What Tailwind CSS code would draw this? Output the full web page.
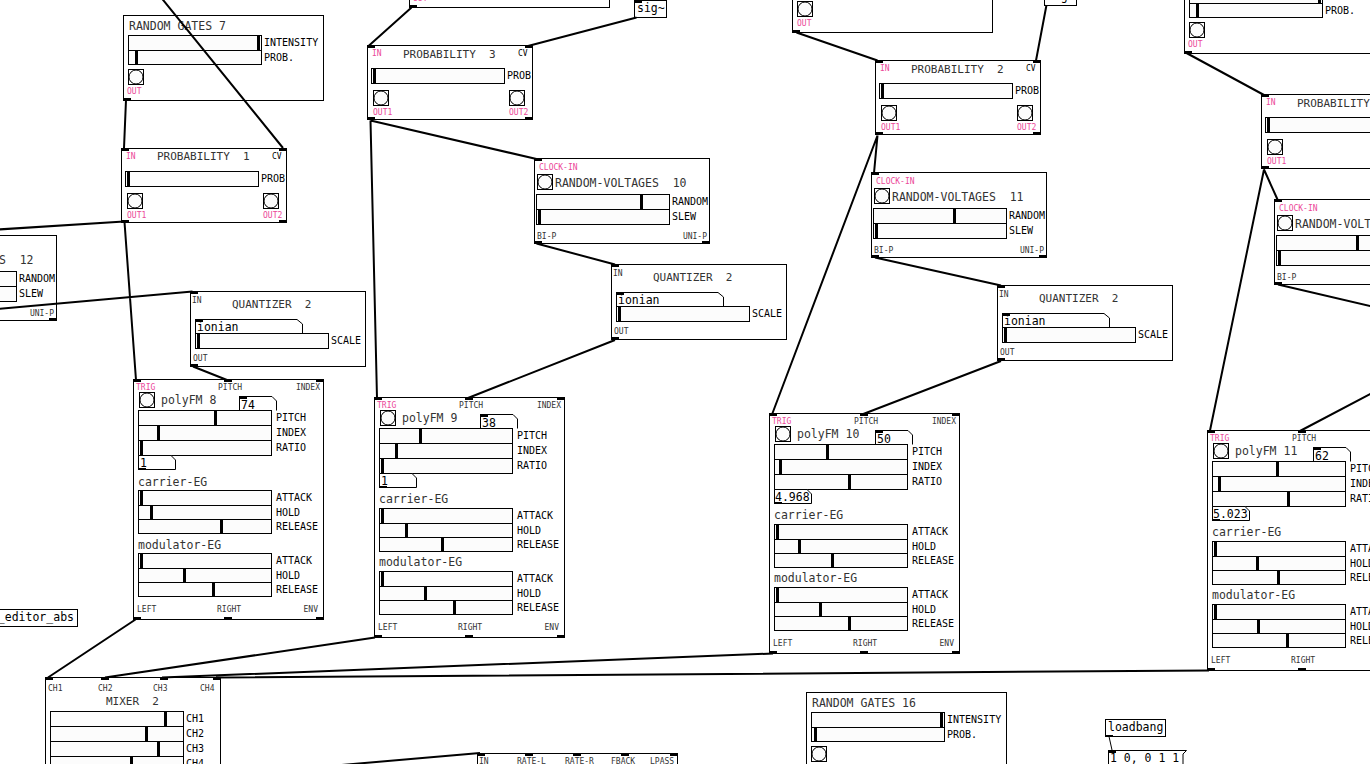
<!DOCTYPE html>
<html>
<head>
<meta charset="utf-8">
<script src="https://cdn.jsdelivr.net/npm/@tailwindcss/browser@4"></script>
</head>
<body class="bg-white">
<div class="relative w-[1370px] h-[764px] overflow-hidden bg-white text-black font-['DejaVu_Sans_Mono',monospace] text-[10px] whitespace-nowrap">

<!-- RANDOM GATES 7 -->
<div class="absolute left-[123px] top-[15px] w-[201px] h-[86px] border border-black bg-white">
  <span class="absolute left-[5px] top-[3px] text-[11.5px] leading-[14px] text-[#333]">RANDOM GATES 7</span>
  <div class="absolute left-[4px] top-[19px]">
    <div class="flex h-[15px]"><div class="relative w-[134px] h-[16px] shrink-0 border border-black bg-[#fcfcfc]"><i class="absolute inset-y-0 left-[128px] w-[3px] bg-black"></i></div><span class="ml-[2px] leading-[15px]">INTENSITY</span></div>
    <div class="flex h-[15px]"><div class="relative w-[134px] h-[15px] shrink-0 border border-black bg-[#fcfcfc]"><i class="absolute inset-y-0 left-[6px] w-[3px] bg-black"></i></div><span class="ml-[2px] leading-[15px]">PROB.</span></div>
  </div>
  <svg class="absolute left-[4px] top-[53px]" width="16" height="16"><rect x=".5" y=".5" width="15" height="15" fill="#fcfcfc" stroke="#000"/><circle cx="8" cy="8" r="7" fill="#fcfcfc" stroke="#000"/></svg>
  <span class="absolute left-[3px] top-[72px] text-[8px] leading-[8px] text-[#ec4899]">OUT</span>
  <i class="absolute -left-px -bottom-px w-[8px] h-[3px] bg-black"></i>
</div>

<!-- RANDOM GATES top -->
<div class="absolute left-[409px] top-[-78px] w-[201px] h-[86px] border border-black bg-white">
  <span class="absolute left-[3px] top-[72px] text-[8px] leading-[8px] text-[#ec4899]">OUT</span>
  <i class="absolute -left-px -bottom-px w-[8px] h-[3px] bg-black"></i>
</div>

<!-- RANDOM GATES top middle -->
<div class="absolute left-[792px] top-[-53px] w-[201px] h-[86px] border border-black bg-white">
  <svg class="absolute left-[4px] top-[53px]" width="16" height="16"><rect x=".5" y=".5" width="15" height="15" fill="#fcfcfc" stroke="#000"/><circle cx="8" cy="8" r="7" fill="#fcfcfc" stroke="#000"/></svg>
  <span class="absolute left-[4px] top-[72px] text-[8px] leading-[8px] text-[#ec4899]">OUT</span>
  <i class="absolute -left-px -bottom-px w-[8px] h-[3px] bg-black"></i>
</div>

<!-- RANDOM GATES top right -->
<div class="absolute left-[1184px] top-[-32px] w-[201px] h-[86px] border border-black bg-white">
  <div class="absolute left-[4px] top-[19px]">
    <div class="flex h-[15px]"><div class="relative w-[134px] h-[16px] shrink-0 border border-black bg-[#fcfcfc]"><i class="absolute inset-y-0 left-[128px] w-[3px] bg-black"></i></div><span class="ml-[2px] leading-[15px]">INTENSITY</span></div>
    <div class="flex h-[15px]"><div class="relative w-[134px] h-[15px] shrink-0 border border-black bg-[#fcfcfc]"><i class="absolute inset-y-0 left-[6px] w-[3px] bg-black"></i></div><span class="ml-[2px] leading-[15px]">PROB.</span></div>
  </div>
  <svg class="absolute left-[4px] top-[53px]" width="16" height="16"><rect x=".5" y=".5" width="15" height="15" fill="#fcfcfc" stroke="#000"/><circle cx="8" cy="8" r="7" fill="#fcfcfc" stroke="#000"/></svg>
  <span class="absolute left-[3px] top-[72px] text-[8px] leading-[8px] text-[#ec4899]">OUT</span>
  <i class="absolute -left-px -bottom-px w-[8px] h-[3px] bg-black"></i>
</div>

<!-- RANDOM GATES 16 -->
<div class="absolute left-[806px] top-[692px] w-[201px] h-[86px] border border-black bg-white">
  <span class="absolute left-[5px] top-[3px] text-[11.5px] leading-[14px] text-[#333]">RANDOM GATES 16</span>
  <div class="absolute left-[4px] top-[19px]">
    <div class="flex h-[15px]"><div class="relative w-[134px] h-[16px] shrink-0 border border-black bg-[#fcfcfc]"><i class="absolute inset-y-0 left-[128px] w-[3px] bg-black"></i></div><span class="ml-[2px] leading-[15px]">INTENSITY</span></div>
    <div class="flex h-[15px]"><div class="relative w-[134px] h-[15px] shrink-0 border border-black bg-[#fcfcfc]"><i class="absolute inset-y-0 left-[2px] w-[3px] bg-black"></i></div><span class="ml-[2px] leading-[15px]">PROB.</span></div>
  </div>
  <svg class="absolute left-[4px] top-[53px]" width="16" height="16"><rect x=".5" y=".5" width="15" height="15" fill="#fcfcfc" stroke="#000"/><circle cx="8" cy="8" r="7" fill="#fcfcfc" stroke="#000"/></svg>
</div>

<!-- sig~ boxes -->
<div class="absolute left-[634px] top-0 w-[33px] h-[18px] border border-black bg-white pl-[2px] text-[11.5px] leading-[15px]">sig~<i class="absolute -left-px -top-px w-[8px] h-[3px] bg-black"></i></div>
<div class="absolute left-[1044px] top-[-12px] w-[33px] h-[18px] border border-black bg-white pl-[2px] text-[11.5px] leading-[15px]">sig~</div>

<!-- PROBABILITY 1 -->
<div class="absolute left-[121px] top-[148px] w-[166px] h-[75px] border border-black bg-white">
  <i class="absolute -left-px -top-px w-[8px] h-[3px] bg-black"></i><i class="absolute -right-px -top-px w-[8px] h-[3px] bg-black"></i><i class="absolute -left-px -bottom-px w-[8px] h-[3px] bg-black"></i><i class="absolute -right-px -bottom-px w-[8px] h-[3px] bg-black"></i>
  <span class="absolute left-[4px] top-[4px] text-[8px] leading-[8px] text-[#ec4899]">IN</span>
  <span class="absolute left-[150px] top-[4px] text-[8px] leading-[8px]">CV</span>
  <span class="absolute left-[35px] top-[1px] whitespace-pre text-[11px] leading-[14px] text-[#333]">PROBABILITY  1</span>
  <div class="absolute left-[3px] top-[22px] flex h-[16px]"><div class="relative w-[134px] h-[16px] shrink-0 border border-black bg-[#fcfcfc]"><i class="absolute inset-y-0 left-[1px] w-[3px] bg-black"></i></div><span class="ml-[2px] leading-[15px]">PROB</span></div>
  <svg class="absolute left-[5px] top-[44px]" width="16" height="16"><rect x=".5" y=".5" width="15" height="15" fill="#fcfcfc" stroke="#000"/><circle cx="8" cy="8" r="7" fill="#fcfcfc" stroke="#000"/></svg>
  <svg class="absolute left-[141px] top-[44px]" width="16" height="16"><rect x=".5" y=".5" width="15" height="15" fill="#fcfcfc" stroke="#000"/><circle cx="8" cy="8" r="7" fill="#fcfcfc" stroke="#000"/></svg>
  <span class="absolute left-[5px] top-[63px] text-[8px] leading-[8px] text-[#ec4899]">OUT1</span>
  <span class="absolute left-[141px] top-[63px] text-[8px] leading-[8px] text-[#ec4899]">OUT2</span>
</div>

<!-- PROBABILITY 3 -->
<div class="absolute left-[367px] top-[45px] w-[166px] h-[75px] border border-black bg-white">
  <i class="absolute -left-px -top-px w-[8px] h-[3px] bg-black"></i><i class="absolute -right-px -top-px w-[8px] h-[3px] bg-black"></i><i class="absolute -left-px -bottom-px w-[8px] h-[3px] bg-black"></i><i class="absolute -right-px -bottom-px w-[8px] h-[3px] bg-black"></i>
  <span class="absolute left-[4px] top-[4px] text-[8px] leading-[8px] text-[#ec4899]">IN</span>
  <span class="absolute left-[150px] top-[4px] text-[8px] leading-[8px]">CV</span>
  <span class="absolute left-[35px] top-[2px] whitespace-pre text-[11px] leading-[14px] text-[#333]">PROBABILITY  3</span>
  <div class="absolute left-[3px] top-[22px] flex h-[16px]"><div class="relative w-[134px] h-[16px] shrink-0 border border-black bg-[#fcfcfc]"><i class="absolute inset-y-0 left-[1px] w-[3px] bg-black"></i></div><span class="ml-[2px] leading-[15px]">PROB</span></div>
  <svg class="absolute left-[5px] top-[44px]" width="16" height="16"><rect x=".5" y=".5" width="15" height="15" fill="#fcfcfc" stroke="#000"/><circle cx="8" cy="8" r="7" fill="#fcfcfc" stroke="#000"/></svg>
  <svg class="absolute left-[141px] top-[44px]" width="16" height="16"><rect x=".5" y=".5" width="15" height="15" fill="#fcfcfc" stroke="#000"/><circle cx="8" cy="8" r="7" fill="#fcfcfc" stroke="#000"/></svg>
  <span class="absolute left-[5px] top-[63px] text-[8px] leading-[8px] text-[#ec4899]">OUT1</span>
  <span class="absolute left-[141px] top-[63px] text-[8px] leading-[8px] text-[#ec4899]">OUT2</span>
</div>

<!-- PROBABILITY 2 -->
<div class="absolute left-[875px] top-[60px] w-[166px] h-[75px] border border-black bg-white">
  <i class="absolute -left-px -top-px w-[8px] h-[3px] bg-black"></i><i class="absolute -right-px -top-px w-[8px] h-[3px] bg-black"></i><i class="absolute -left-px -bottom-px w-[8px] h-[3px] bg-black"></i><i class="absolute -right-px -bottom-px w-[8px] h-[3px] bg-black"></i>
  <span class="absolute left-[4px] top-[4px] text-[8px] leading-[8px] text-[#ec4899]">IN</span>
  <span class="absolute left-[150px] top-[4px] text-[8px] leading-[8px]">CV</span>
  <span class="absolute left-[35px] top-[2px] whitespace-pre text-[11px] leading-[14px] text-[#333]">PROBABILITY  2</span>
  <div class="absolute left-[3px] top-[22px] flex h-[16px]"><div class="relative w-[134px] h-[16px] shrink-0 border border-black bg-[#fcfcfc]"><i class="absolute inset-y-0 left-[1px] w-[3px] bg-black"></i></div><span class="ml-[2px] leading-[15px]">PROB</span></div>
  <svg class="absolute left-[5px] top-[44px]" width="16" height="16"><rect x=".5" y=".5" width="15" height="15" fill="#fcfcfc" stroke="#000"/><circle cx="8" cy="8" r="7" fill="#fcfcfc" stroke="#000"/></svg>
  <svg class="absolute left-[141px] top-[44px]" width="16" height="16"><rect x=".5" y=".5" width="15" height="15" fill="#fcfcfc" stroke="#000"/><circle cx="8" cy="8" r="7" fill="#fcfcfc" stroke="#000"/></svg>
  <span class="absolute left-[5px] top-[63px] text-[8px] leading-[8px] text-[#ec4899]">OUT1</span>
  <span class="absolute left-[141px] top-[63px] text-[8px] leading-[8px] text-[#ec4899]">OUT2</span>
</div>

<!-- PROBABILITY 4 -->
<div class="absolute left-[1261px] top-[94px] w-[166px] h-[75px] border border-black bg-white">
  <i class="absolute -left-px -top-px w-[8px] h-[3px] bg-black"></i><i class="absolute -left-px -bottom-px w-[8px] h-[3px] bg-black"></i>
  <span class="absolute left-[4px] top-[4px] text-[8px] leading-[8px] text-[#ec4899]">IN</span>
  <span class="absolute left-[35px] top-[2px] whitespace-pre text-[11px] leading-[14px] text-[#333]">PROBABILITY  4</span>
  <div class="absolute left-[3px] top-[22px] flex h-[16px]"><div class="relative w-[134px] h-[16px] shrink-0 border border-black bg-[#fcfcfc]"><i class="absolute inset-y-0 left-[1px] w-[3px] bg-black"></i></div></div>
  <svg class="absolute left-[5px] top-[44px]" width="16" height="16"><rect x=".5" y=".5" width="15" height="15" fill="#fcfcfc" stroke="#000"/><circle cx="8" cy="8" r="7" fill="#fcfcfc" stroke="#000"/></svg>
  <span class="absolute left-[5px] top-[63px] text-[8px] leading-[8px] text-[#ec4899]">OUT1</span>
</div>

<!-- RANDOM-VOLTAGES 12 -->
<div class="absolute left-[-119px] top-[235px] w-[176px] h-[86px] border border-black bg-white">
  <span class="absolute left-[20px] top-[17px] whitespace-pre text-[11.5px] leading-[14px] text-[#333]">RANDOM-VOLTAGES  12</span>
  <div class="absolute left-[1px] top-[35px]">
    <div class="flex h-[15px]"><div class="relative w-[134px] h-[16px] shrink-0 border border-black bg-[#fcfcfc]"></div><span class="ml-[2px] leading-[15px]">RANDOM</span></div>
    <div class="flex h-[15px]"><div class="relative w-[134px] h-[16px] shrink-0 border border-black bg-[#fcfcfc]"></div><span class="ml-[2px] leading-[15px]">SLEW</span></div>
  </div>
  <span class="absolute right-[2px] top-[74px] text-[8px] leading-[8px] text-[#333]">UNI-P</span>
  <i class="absolute -right-px -bottom-px w-[8px] h-[3px] bg-black"></i>
</div>

<!-- RANDOM-VOLTAGES 10 -->
<div class="absolute left-[534px] top-[158px] w-[176px] h-[86px] border border-black bg-white">
  <i class="absolute -left-px -top-px w-[8px] h-[3px] bg-black"></i><i class="absolute -left-px -bottom-px w-[8px] h-[3px] bg-black"></i><i class="absolute -right-px -bottom-px w-[8px] h-[3px] bg-black"></i>
  <span class="absolute left-[4px] top-[5px] text-[8px] leading-[8px] text-[#ec4899]">CLOCK-IN</span>
  <svg class="absolute left-[2px] top-[15px]" width="16" height="16"><rect x=".5" y=".5" width="15" height="15" fill="#fcfcfc" stroke="#000"/><circle cx="8" cy="8" r="7" fill="#fcfcfc" stroke="#000"/></svg>
  <span class="absolute left-[20px] top-[17px] whitespace-pre text-[11.5px] leading-[14px] text-[#333]">RANDOM-VOLTAGES  10</span>
  <div class="absolute left-[1px] top-[35px]">
    <div class="flex h-[15px]"><div class="relative w-[134px] h-[16px] shrink-0 border border-black bg-[#fcfcfc]"><i class="absolute inset-y-0 left-[103px] w-[3px] bg-black"></i></div><span class="ml-[2px] leading-[15px]">RANDOM</span></div>
    <div class="flex h-[15px]"><div class="relative w-[134px] h-[16px] shrink-0 border border-black bg-[#fcfcfc]"><i class="absolute inset-y-0 left-[1px] w-[3px] bg-black"></i></div><span class="ml-[2px] leading-[15px]">SLEW</span></div>
  </div>
  <span class="absolute left-[2px] top-[74px] text-[8px] leading-[8px] text-[#333]">BI-P</span>
  <span class="absolute right-[2px] top-[74px] text-[8px] leading-[8px] text-[#333]">UNI-P</span>
</div>

<!-- RANDOM-VOLTAGES 11 -->
<div class="absolute left-[871px] top-[172px] w-[176px] h-[86px] border border-black bg-white">
  <i class="absolute -left-px -top-px w-[8px] h-[3px] bg-black"></i><i class="absolute -left-px -bottom-px w-[8px] h-[3px] bg-black"></i><i class="absolute -right-px -bottom-px w-[8px] h-[3px] bg-black"></i>
  <span class="absolute left-[4px] top-[5px] text-[8px] leading-[8px] text-[#ec4899]">CLOCK-IN</span>
  <svg class="absolute left-[2px] top-[15px]" width="16" height="16"><rect x=".5" y=".5" width="15" height="15" fill="#fcfcfc" stroke="#000"/><circle cx="8" cy="8" r="7" fill="#fcfcfc" stroke="#000"/></svg>
  <span class="absolute left-[20px] top-[17px] whitespace-pre text-[11.5px] leading-[14px] text-[#333]">RANDOM-VOLTAGES  11</span>
  <div class="absolute left-[1px] top-[35px]">
    <div class="flex h-[15px]"><div class="relative w-[134px] h-[16px] shrink-0 border border-black bg-[#fcfcfc]"><i class="absolute inset-y-0 left-[79px] w-[3px] bg-black"></i></div><span class="ml-[2px] leading-[15px]">RANDOM</span></div>
    <div class="flex h-[15px]"><div class="relative w-[134px] h-[16px] shrink-0 border border-black bg-[#fcfcfc]"><i class="absolute inset-y-0 left-[1px] w-[3px] bg-black"></i></div><span class="ml-[2px] leading-[15px]">SLEW</span></div>
  </div>
  <span class="absolute left-[2px] top-[74px] text-[8px] leading-[8px] text-[#333]">BI-P</span>
  <span class="absolute right-[2px] top-[74px] text-[8px] leading-[8px] text-[#333]">UNI-P</span>
</div>

<!-- RANDOM-VOLTAGES right -->
<div class="absolute left-[1274px] top-[199px] w-[176px] h-[86px] border border-black bg-white">
  <i class="absolute -left-px -top-px w-[8px] h-[3px] bg-black"></i><i class="absolute -left-px -bottom-px w-[8px] h-[3px] bg-black"></i>
  <span class="absolute left-[4px] top-[5px] text-[8px] leading-[8px] text-[#ec4899]">CLOCK-IN</span>
  <svg class="absolute left-[2px] top-[15px]" width="16" height="16"><rect x=".5" y=".5" width="15" height="15" fill="#fcfcfc" stroke="#000"/><circle cx="8" cy="8" r="7" fill="#fcfcfc" stroke="#000"/></svg>
  <span class="absolute left-[20px] top-[17px] whitespace-pre text-[11.5px] leading-[14px] text-[#333]">RANDOM-VOLTAGES</span>
  <div class="absolute left-[1px] top-[35px]">
    <div class="flex h-[15px]"><div class="relative w-[134px] h-[16px] shrink-0 border border-black bg-[#fcfcfc]"><i class="absolute inset-y-0 left-[79px] w-[3px] bg-black"></i></div></div>
    <div class="flex h-[15px]"><div class="relative w-[134px] h-[16px] shrink-0 border border-black bg-[#fcfcfc]"><i class="absolute inset-y-0 left-[1px] w-[3px] bg-black"></i></div></div>
  </div>
  <span class="absolute left-[2px] top-[74px] text-[8px] leading-[8px] text-[#333]">BI-P</span>
</div>

<!-- QUANTIZER 1 -->
<div class="absolute left-[190px] top-[291px] w-[176px] h-[76px] border border-black bg-white">
  <i class="absolute -left-px -top-px w-[8px] h-[3px] bg-black"></i><i class="absolute -left-px -bottom-px w-[8px] h-[3px] bg-black"></i>
  <span class="absolute left-[1px] top-[5px] text-[8px] leading-[8px] text-[#333]">IN</span>
  <span class="absolute left-[41px] top-[6px] whitespace-pre text-[11px] leading-[14px] text-[#333]">QUANTIZER  2</span>
  <div class="absolute left-[4px] top-[27px] w-[108px] h-[15px]"><svg class="absolute inset-0" width="108" height="15"><path d="M.5 14.5V.5H102L107.5 5V14.5" fill="#fff" stroke="#000"/></svg><i class="absolute left-0 top-0 w-[8px] h-[3px] bg-black"></i><span class="absolute left-[2px] top-[1px] text-[11.5px] leading-[14px]">ionian</span></div>
  <div class="absolute left-[4px] top-[41px] flex h-[16px]"><div class="relative w-[134px] h-[16px] shrink-0 border border-black bg-[#fcfcfc]"><i class="absolute inset-y-0 left-[1px] w-[3px] bg-black"></i></div><span class="ml-[2px] leading-[15px]">SCALE</span></div>
  <span class="absolute left-[2px] top-[63px] text-[8px] leading-[8px] text-[#333]">OUT</span>
</div>

<!-- QUANTIZER 2 -->
<div class="absolute left-[611px] top-[264px] w-[176px] h-[76px] border border-black bg-white">
  <i class="absolute -left-px -top-px w-[8px] h-[3px] bg-black"></i><i class="absolute -left-px -bottom-px w-[8px] h-[3px] bg-black"></i>
  <span class="absolute left-[1px] top-[5px] text-[8px] leading-[8px] text-[#333]">IN</span>
  <span class="absolute left-[41px] top-[6px] whitespace-pre text-[11px] leading-[14px] text-[#333]">QUANTIZER  2</span>
  <div class="absolute left-[4px] top-[27px] w-[108px] h-[15px]"><svg class="absolute inset-0" width="108" height="15"><path d="M.5 14.5V.5H102L107.5 5V14.5" fill="#fff" stroke="#000"/></svg><i class="absolute left-0 top-0 w-[8px] h-[3px] bg-black"></i><span class="absolute left-[2px] top-[1px] text-[11.5px] leading-[14px]">ionian</span></div>
  <div class="absolute left-[4px] top-[41px] flex h-[16px]"><div class="relative w-[134px] h-[16px] shrink-0 border border-black bg-[#fcfcfc]"><i class="absolute inset-y-0 left-[1px] w-[3px] bg-black"></i></div><span class="ml-[2px] leading-[15px]">SCALE</span></div>
  <span class="absolute left-[2px] top-[63px] text-[8px] leading-[8px] text-[#333]">OUT</span>
</div>

<!-- QUANTIZER 3 -->
<div class="absolute left-[997px] top-[285px] w-[176px] h-[76px] border border-black bg-white">
  <i class="absolute -left-px -top-px w-[8px] h-[3px] bg-black"></i><i class="absolute -left-px -bottom-px w-[8px] h-[3px] bg-black"></i>
  <span class="absolute left-[1px] top-[5px] text-[8px] leading-[8px] text-[#333]">IN</span>
  <span class="absolute left-[41px] top-[6px] whitespace-pre text-[11px] leading-[14px] text-[#333]">QUANTIZER  2</span>
  <div class="absolute left-[4px] top-[27px] w-[108px] h-[15px]"><svg class="absolute inset-0" width="108" height="15"><path d="M.5 14.5V.5H102L107.5 5V14.5" fill="#fff" stroke="#000"/></svg><i class="absolute left-0 top-0 w-[8px] h-[3px] bg-black"></i><span class="absolute left-[2px] top-[1px] text-[11.5px] leading-[14px]">ionian</span></div>
  <div class="absolute left-[4px] top-[41px] flex h-[16px]"><div class="relative w-[134px] h-[16px] shrink-0 border border-black bg-[#fcfcfc]"><i class="absolute inset-y-0 left-[1px] w-[3px] bg-black"></i></div><span class="ml-[2px] leading-[15px]">SCALE</span></div>
  <span class="absolute left-[2px] top-[63px] text-[8px] leading-[8px] text-[#333]">OUT</span>
</div>

<!-- polyFM 8 -->
<div class="absolute left-[133px] top-[379px] w-[191px] h-[241px] border border-black bg-white">
  <i class="absolute -left-px -top-px w-[8px] h-[3px] bg-black"></i><i class="absolute left-[90px] -top-px w-[8px] h-[3px] bg-black"></i><i class="absolute -right-px -top-px w-[8px] h-[3px] bg-black"></i><i class="absolute -left-px -bottom-px w-[8px] h-[3px] bg-black"></i><i class="absolute left-[90px] -bottom-px w-[8px] h-[3px] bg-black"></i><i class="absolute -right-px -bottom-px w-[8px] h-[3px] bg-black"></i>
  <span class="absolute left-[2px] top-[4px] text-[8px] leading-[8px] text-[#ec4899]">TRIG</span>
  <span class="absolute left-[84px] top-[4px] text-[8px] leading-[8px] text-[#333]">PITCH</span>
  <span class="absolute right-[3px] top-[4px] text-[8px] leading-[8px] text-[#333]">INDEX</span>
  <svg class="absolute left-[5px] top-[12px]" width="16" height="16"><rect x=".5" y=".5" width="15" height="15" fill="#fcfcfc" stroke="#000"/><circle cx="8" cy="8" r="7" fill="#fcfcfc" stroke="#000"/></svg>
  <span class="absolute left-[27px] top-[13px] text-[11.5px] leading-[14px] text-[#333]">polyFM 8</span>
  <div class="absolute left-[105px] top-[16px] w-[38px] h-[15px]"><svg class="absolute inset-0" width="38" height="15"><path d="M.5 14.5V.5H33L37.5 5V14.5" fill="#fff" stroke="#000"/></svg><i class="absolute left-0 top-0 w-[8px] h-[3px] bg-black"></i><span class="absolute left-[2px] top-[2px] text-[11.5px] leading-[14px]">74</span></div>
  <div class="absolute left-[4px] top-[30px]">
    <div class="flex h-[15px]"><div class="relative w-[134px] h-[16px] shrink-0 border border-black bg-[#fcfcfc]"><i class="absolute inset-y-0 left-[75px] w-[3px] bg-black"></i></div><span class="ml-[4px] leading-[15px]">PITCH</span></div>
    <div class="flex h-[15px]"><div class="relative w-[134px] h-[16px] shrink-0 border border-black bg-[#fcfcfc]"><i class="absolute inset-y-0 left-[18px] w-[3px] bg-black"></i></div><span class="ml-[4px] leading-[15px]">INDEX</span></div>
    <div class="flex h-[15px]"><div class="relative w-[134px] h-[16px] shrink-0 border border-black bg-[#fcfcfc]"><i class="absolute inset-y-0 left-[1px] w-[3px] bg-black"></i></div><span class="ml-[4px] leading-[15px]">RATIO</span></div>
  </div>
  <div class="absolute left-[4px] top-[75px] w-[38px] h-[15px]"><svg class="absolute inset-0" width="38" height="15"><path d="M.5 14.5V.5H33L37.5 5V14.5Z" fill="#fff" stroke="#000"/></svg><i class="absolute left-0 bottom-0 w-[8px] h-[2px] bg-black"></i><span class="absolute left-[2px] top-[1px] text-[11.5px] leading-[14px]">1</span></div>
  <span class="absolute left-[4px] top-[95px] text-[11.5px] leading-[14px] text-[#333]">carrier-EG</span>
  <div class="absolute left-[4px] top-[110px]">
    <div class="flex h-[15px]"><div class="relative w-[134px] h-[16px] shrink-0 border border-black bg-[#fcfcfc]"><i class="absolute inset-y-0 left-[1px] w-[3px] bg-black"></i></div><span class="ml-[4px] leading-[15px]">ATTACK</span></div>
    <div class="flex h-[14px]"><div class="relative w-[134px] h-[15px] shrink-0 border border-black bg-[#fcfcfc]"><i class="absolute inset-y-0 left-[11px] w-[3px] bg-black"></i></div><span class="ml-[4px] leading-[15px]">HOLD</span></div>
    <div class="flex h-[15px]"><div class="relative w-[134px] h-[15px] shrink-0 border border-black bg-[#fcfcfc]"><i class="absolute inset-y-0 left-[81px] w-[3px] bg-black"></i></div><span class="ml-[4px] leading-[15px]">RELEASE</span></div>
  </div>
  <span class="absolute left-[4px] top-[158px] text-[11.5px] leading-[14px] text-[#333]">modulator-EG</span>
  <div class="absolute left-[4px] top-[173px]">
    <div class="flex h-[15px]"><div class="relative w-[134px] h-[16px] shrink-0 border border-black bg-[#fcfcfc]"><i class="absolute inset-y-0 left-[1px] w-[3px] bg-black"></i></div><span class="ml-[4px] leading-[15px]">ATTACK</span></div>
    <div class="flex h-[14px]"><div class="relative w-[134px] h-[15px] shrink-0 border border-black bg-[#fcfcfc]"><i class="absolute inset-y-0 left-[44px] w-[3px] bg-black"></i></div><span class="ml-[4px] leading-[15px]">HOLD</span></div>
    <div class="flex h-[15px]"><div class="relative w-[134px] h-[15px] shrink-0 border border-black bg-[#fcfcfc]"><i class="absolute inset-y-0 left-[73px] w-[3px] bg-black"></i></div><span class="ml-[4px] leading-[15px]">RELEASE</span></div>
  </div>
  <span class="absolute left-[3px] top-[226px] text-[8px] leading-[8px] text-[#333]">LEFT</span>
  <span class="absolute left-[83px] top-[226px] text-[8px] leading-[8px] text-[#333]">RIGHT</span>
  <span class="absolute right-[5px] top-[226px] text-[8px] leading-[8px] text-[#333]">ENV</span>
</div>

<!-- polyFM 9 -->
<div class="absolute left-[374px] top-[397px] w-[191px] h-[241px] border border-black bg-white">
  <i class="absolute -left-px -top-px w-[8px] h-[3px] bg-black"></i><i class="absolute left-[90px] -top-px w-[8px] h-[3px] bg-black"></i><i class="absolute -right-px -top-px w-[8px] h-[3px] bg-black"></i><i class="absolute -left-px -bottom-px w-[8px] h-[3px] bg-black"></i><i class="absolute left-[90px] -bottom-px w-[8px] h-[3px] bg-black"></i><i class="absolute -right-px -bottom-px w-[8px] h-[3px] bg-black"></i>
  <span class="absolute left-[2px] top-[4px] text-[8px] leading-[8px] text-[#ec4899]">TRIG</span>
  <span class="absolute left-[84px] top-[4px] text-[8px] leading-[8px] text-[#333]">PITCH</span>
  <span class="absolute right-[3px] top-[4px] text-[8px] leading-[8px] text-[#333]">INDEX</span>
  <svg class="absolute left-[5px] top-[12px]" width="16" height="16"><rect x=".5" y=".5" width="15" height="15" fill="#fcfcfc" stroke="#000"/><circle cx="8" cy="8" r="7" fill="#fcfcfc" stroke="#000"/></svg>
  <span class="absolute left-[27px] top-[13px] text-[11.5px] leading-[14px] text-[#333]">polyFM 9</span>
  <div class="absolute left-[105px] top-[16px] w-[38px] h-[15px]"><svg class="absolute inset-0" width="38" height="15"><path d="M.5 14.5V.5H33L37.5 5V14.5" fill="#fff" stroke="#000"/></svg><i class="absolute left-0 top-0 w-[8px] h-[3px] bg-black"></i><span class="absolute left-[2px] top-[2px] text-[11.5px] leading-[14px]">38</span></div>
  <div class="absolute left-[4px] top-[30px]">
    <div class="flex h-[15px]"><div class="relative w-[134px] h-[16px] shrink-0 border border-black bg-[#fcfcfc]"><i class="absolute inset-y-0 left-[39px] w-[3px] bg-black"></i></div><span class="ml-[4px] leading-[15px]">PITCH</span></div>
    <div class="flex h-[15px]"><div class="relative w-[134px] h-[16px] shrink-0 border border-black bg-[#fcfcfc]"><i class="absolute inset-y-0 left-[15px] w-[3px] bg-black"></i></div><span class="ml-[4px] leading-[15px]">INDEX</span></div>
    <div class="flex h-[15px]"><div class="relative w-[134px] h-[16px] shrink-0 border border-black bg-[#fcfcfc]"><i class="absolute inset-y-0 left-[1px] w-[3px] bg-black"></i></div><span class="ml-[4px] leading-[15px]">RATIO</span></div>
  </div>
  <div class="absolute left-[4px] top-[75px] w-[38px] h-[15px]"><svg class="absolute inset-0" width="38" height="15"><path d="M.5 14.5V.5H33L37.5 5V14.5Z" fill="#fff" stroke="#000"/></svg><i class="absolute left-0 bottom-0 w-[8px] h-[2px] bg-black"></i><span class="absolute left-[2px] top-[1px] text-[11.5px] leading-[14px]">1</span></div>
  <span class="absolute left-[4px] top-[94px] text-[11.5px] leading-[14px] text-[#333]">carrier-EG</span>
  <div class="absolute left-[4px] top-[110px]">
    <div class="flex h-[15px]"><div class="relative w-[134px] h-[16px] shrink-0 border border-black bg-[#fcfcfc]"><i class="absolute inset-y-0 left-[1px] w-[3px] bg-black"></i></div><span class="ml-[4px] leading-[15px]">ATTACK</span></div>
    <div class="flex h-[14px]"><div class="relative w-[134px] h-[15px] shrink-0 border border-black bg-[#fcfcfc]"><i class="absolute inset-y-0 left-[25px] w-[3px] bg-black"></i></div><span class="ml-[4px] leading-[15px]">HOLD</span></div>
    <div class="flex h-[15px]"><div class="relative w-[134px] h-[15px] shrink-0 border border-black bg-[#fcfcfc]"><i class="absolute inset-y-0 left-[61px] w-[3px] bg-black"></i></div><span class="ml-[4px] leading-[15px]">RELEASE</span></div>
  </div>
  <span class="absolute left-[4px] top-[157px] text-[11.5px] leading-[14px] text-[#333]">modulator-EG</span>
  <div class="absolute left-[4px] top-[173px]">
    <div class="flex h-[15px]"><div class="relative w-[134px] h-[16px] shrink-0 border border-black bg-[#fcfcfc]"><i class="absolute inset-y-0 left-[1px] w-[3px] bg-black"></i></div><span class="ml-[4px] leading-[15px]">ATTACK</span></div>
    <div class="flex h-[14px]"><div class="relative w-[134px] h-[15px] shrink-0 border border-black bg-[#fcfcfc]"><i class="absolute inset-y-0 left-[44px] w-[3px] bg-black"></i></div><span class="ml-[4px] leading-[15px]">HOLD</span></div>
    <div class="flex h-[15px]"><div class="relative w-[134px] h-[15px] shrink-0 border border-black bg-[#fcfcfc]"><i class="absolute inset-y-0 left-[73px] w-[3px] bg-black"></i></div><span class="ml-[4px] leading-[15px]">RELEASE</span></div>
  </div>
  <span class="absolute left-[3px] top-[226px] text-[8px] leading-[8px] text-[#333]">LEFT</span>
  <span class="absolute left-[83px] top-[226px] text-[8px] leading-[8px] text-[#333]">RIGHT</span>
  <span class="absolute right-[5px] top-[226px] text-[8px] leading-[8px] text-[#333]">ENV</span>
</div>

<!-- polyFM 10 -->
<div class="absolute left-[769px] top-[413px] w-[191px] h-[241px] border border-black bg-white">
  <i class="absolute -left-px -top-px w-[8px] h-[3px] bg-black"></i><i class="absolute left-[90px] -top-px w-[8px] h-[3px] bg-black"></i><i class="absolute -right-px -top-px w-[8px] h-[3px] bg-black"></i><i class="absolute -left-px -bottom-px w-[8px] h-[3px] bg-black"></i><i class="absolute left-[90px] -bottom-px w-[8px] h-[3px] bg-black"></i><i class="absolute -right-px -bottom-px w-[8px] h-[3px] bg-black"></i>
  <span class="absolute left-[2px] top-[4px] text-[8px] leading-[8px] text-[#ec4899]">TRIG</span>
  <span class="absolute left-[84px] top-[4px] text-[8px] leading-[8px] text-[#333]">PITCH</span>
  <span class="absolute right-[3px] top-[4px] text-[8px] leading-[8px] text-[#333]">INDEX</span>
  <svg class="absolute left-[5px] top-[12px]" width="16" height="16"><rect x=".5" y=".5" width="15" height="15" fill="#fcfcfc" stroke="#000"/><circle cx="8" cy="8" r="7" fill="#fcfcfc" stroke="#000"/></svg>
  <span class="absolute left-[27px] top-[13px] text-[11.5px] leading-[14px] text-[#333]">polyFM 10</span>
  <div class="absolute left-[105px] top-[16px] w-[38px] h-[15px]"><svg class="absolute inset-0" width="38" height="15"><path d="M.5 14.5V.5H33L37.5 5V14.5" fill="#fff" stroke="#000"/></svg><i class="absolute left-0 top-0 w-[8px] h-[3px] bg-black"></i><span class="absolute left-[2px] top-[2px] text-[11.5px] leading-[14px]">50</span></div>
  <div class="absolute left-[4px] top-[30px]">
    <div class="flex h-[15px]"><div class="relative w-[134px] h-[16px] shrink-0 border border-black bg-[#fcfcfc]"><i class="absolute inset-y-0 left-[51px] w-[3px] bg-black"></i></div><span class="ml-[4px] leading-[15px]">PITCH</span></div>
    <div class="flex h-[15px]"><div class="relative w-[134px] h-[16px] shrink-0 border border-black bg-[#fcfcfc]"><i class="absolute inset-y-0 left-[4px] w-[3px] bg-black"></i></div><span class="ml-[4px] leading-[15px]">INDEX</span></div>
    <div class="flex h-[15px]"><div class="relative w-[134px] h-[16px] shrink-0 border border-black bg-[#fcfcfc]"><i class="absolute inset-y-0 left-[73px] w-[3px] bg-black"></i></div><span class="ml-[4px] leading-[15px]">RATIO</span></div>
  </div>
  <div class="absolute left-[4px] top-[75px] w-[38px] h-[15px]"><svg class="absolute inset-0" width="38" height="15"><path d="M.5 14.5V.5H33L37.5 5V14.5Z" fill="#fff" stroke="#000"/></svg><i class="absolute left-0 bottom-0 w-[8px] h-[2px] bg-black"></i><span class="absolute left-[1px] top-[1px] text-[11.5px] leading-[14px]">4.968</span></div>
  <span class="absolute left-[4px] top-[94px] text-[11.5px] leading-[14px] text-[#333]">carrier-EG</span>
  <div class="absolute left-[4px] top-[110px]">
    <div class="flex h-[15px]"><div class="relative w-[134px] h-[16px] shrink-0 border border-black bg-[#fcfcfc]"><i class="absolute inset-y-0 left-[1px] w-[3px] bg-black"></i></div><span class="ml-[4px] leading-[15px]">ATTACK</span></div>
    <div class="flex h-[14px]"><div class="relative w-[134px] h-[15px] shrink-0 border border-black bg-[#fcfcfc]"><i class="absolute inset-y-0 left-[23px] w-[3px] bg-black"></i></div><span class="ml-[4px] leading-[15px]">HOLD</span></div>
    <div class="flex h-[15px]"><div class="relative w-[134px] h-[15px] shrink-0 border border-black bg-[#fcfcfc]"><i class="absolute inset-y-0 left-[56px] w-[3px] bg-black"></i></div><span class="ml-[4px] leading-[15px]">RELEASE</span></div>
  </div>
  <span class="absolute left-[4px] top-[157px] text-[11.5px] leading-[14px] text-[#333]">modulator-EG</span>
  <div class="absolute left-[4px] top-[173px]">
    <div class="flex h-[15px]"><div class="relative w-[134px] h-[16px] shrink-0 border border-black bg-[#fcfcfc]"><i class="absolute inset-y-0 left-[1px] w-[3px] bg-black"></i></div><span class="ml-[4px] leading-[15px]">ATTACK</span></div>
    <div class="flex h-[14px]"><div class="relative w-[134px] h-[15px] shrink-0 border border-black bg-[#fcfcfc]"><i class="absolute inset-y-0 left-[44px] w-[3px] bg-black"></i></div><span class="ml-[4px] leading-[15px]">HOLD</span></div>
    <div class="flex h-[15px]"><div class="relative w-[134px] h-[15px] shrink-0 border border-black bg-[#fcfcfc]"><i class="absolute inset-y-0 left-[73px] w-[3px] bg-black"></i></div><span class="ml-[4px] leading-[15px]">RELEASE</span></div>
  </div>
  <span class="absolute left-[3px] top-[226px] text-[8px] leading-[8px] text-[#333]">LEFT</span>
  <span class="absolute left-[83px] top-[226px] text-[8px] leading-[8px] text-[#333]">RIGHT</span>
  <span class="absolute right-[5px] top-[226px] text-[8px] leading-[8px] text-[#333]">ENV</span>
</div>

<!-- polyFM 11 -->
<div class="absolute left-[1207px] top-[430px] w-[191px] h-[241px] border border-black bg-white">
  <i class="absolute -left-px -top-px w-[8px] h-[3px] bg-black"></i><i class="absolute left-[90px] -top-px w-[8px] h-[3px] bg-black"></i><i class="absolute -left-px -bottom-px w-[8px] h-[3px] bg-black"></i><i class="absolute left-[90px] -bottom-px w-[8px] h-[3px] bg-black"></i>
  <span class="absolute left-[2px] top-[4px] text-[8px] leading-[8px] text-[#ec4899]">TRIG</span>
  <span class="absolute left-[84px] top-[4px] text-[8px] leading-[8px] text-[#333]">PITCH</span>
  <span class="absolute right-[3px] top-[4px] text-[8px] leading-[8px] text-[#333]">INDEX</span>
  <svg class="absolute left-[5px] top-[12px]" width="16" height="16"><rect x=".5" y=".5" width="15" height="15" fill="#fcfcfc" stroke="#000"/><circle cx="8" cy="8" r="7" fill="#fcfcfc" stroke="#000"/></svg>
  <span class="absolute left-[27px] top-[13px] text-[11.5px] leading-[14px] text-[#333]">polyFM 11</span>
  <div class="absolute left-[105px] top-[16px] w-[38px] h-[15px]"><svg class="absolute inset-0" width="38" height="15"><path d="M.5 14.5V.5H33L37.5 5V14.5" fill="#fff" stroke="#000"/></svg><i class="absolute left-0 top-0 w-[8px] h-[3px] bg-black"></i><span class="absolute left-[2px] top-[2px] text-[11.5px] leading-[14px]">62</span></div>
  <div class="absolute left-[4px] top-[30px]">
    <div class="flex h-[15px]"><div class="relative w-[134px] h-[16px] shrink-0 border border-black bg-[#fcfcfc]"><i class="absolute inset-y-0 left-[63px] w-[3px] bg-black"></i></div><span class="ml-[4px] leading-[15px]">PITCH</span></div>
    <div class="flex h-[15px]"><div class="relative w-[134px] h-[16px] shrink-0 border border-black bg-[#fcfcfc]"><i class="absolute inset-y-0 left-[5px] w-[3px] bg-black"></i></div><span class="ml-[4px] leading-[15px]">INDEX</span></div>
    <div class="flex h-[15px]"><div class="relative w-[134px] h-[16px] shrink-0 border border-black bg-[#fcfcfc]"><i class="absolute inset-y-0 left-[74px] w-[3px] bg-black"></i></div><span class="ml-[4px] leading-[15px]">RATIO</span></div>
  </div>
  <div class="absolute left-[4px] top-[75px] w-[38px] h-[15px]"><svg class="absolute inset-0" width="38" height="15"><path d="M.5 14.5V.5H33L37.5 5V14.5Z" fill="#fff" stroke="#000"/></svg><i class="absolute left-0 bottom-0 w-[8px] h-[2px] bg-black"></i><span class="absolute left-[1px] top-[1px] text-[11.5px] leading-[14px]">5.023</span></div>
  <span class="absolute left-[4px] top-[94px] text-[11.5px] leading-[14px] text-[#333]">carrier-EG</span>
  <div class="absolute left-[4px] top-[110px]">
    <div class="flex h-[15px]"><div class="relative w-[134px] h-[16px] shrink-0 border border-black bg-[#fcfcfc]"><i class="absolute inset-y-0 left-[1px] w-[3px] bg-black"></i></div><span class="ml-[4px] leading-[15px]">ATTACK</span></div>
    <div class="flex h-[14px]"><div class="relative w-[134px] h-[15px] shrink-0 border border-black bg-[#fcfcfc]"><i class="absolute inset-y-0 left-[43px] w-[3px] bg-black"></i></div><span class="ml-[4px] leading-[15px]">HOLD</span></div>
    <div class="flex h-[15px]"><div class="relative w-[134px] h-[15px] shrink-0 border border-black bg-[#fcfcfc]"><i class="absolute inset-y-0 left-[64px] w-[3px] bg-black"></i></div><span class="ml-[4px] leading-[15px]">RELEASE</span></div>
  </div>
  <span class="absolute left-[4px] top-[157px] text-[11.5px] leading-[14px] text-[#333]">modulator-EG</span>
  <div class="absolute left-[4px] top-[173px]">
    <div class="flex h-[15px]"><div class="relative w-[134px] h-[16px] shrink-0 border border-black bg-[#fcfcfc]"><i class="absolute inset-y-0 left-[1px] w-[3px] bg-black"></i></div><span class="ml-[4px] leading-[15px]">ATTACK</span></div>
    <div class="flex h-[14px]"><div class="relative w-[134px] h-[15px] shrink-0 border border-black bg-[#fcfcfc]"><i class="absolute inset-y-0 left-[44px] w-[3px] bg-black"></i></div><span class="ml-[4px] leading-[15px]">HOLD</span></div>
    <div class="flex h-[15px]"><div class="relative w-[134px] h-[15px] shrink-0 border border-black bg-[#fcfcfc]"><i class="absolute inset-y-0 left-[73px] w-[3px] bg-black"></i></div><span class="ml-[4px] leading-[15px]">RELEASE</span></div>
  </div>
  <span class="absolute left-[3px] top-[226px] text-[8px] leading-[8px] text-[#333]">LEFT</span>
  <span class="absolute left-[83px] top-[226px] text-[8px] leading-[8px] text-[#333]">RIGHT</span>
</div>

<!-- _editor_abs -->
<div class="absolute left-[-40px] top-[609px] w-[118px] h-[18px] border border-black bg-white text-right pr-[3px] text-[11.5px] leading-[15px]">_editor_abs</div>

<!-- MIXER 2 -->
<div class="absolute left-[45px] top-[677px] w-[176px] h-[100px] border border-black bg-white">
  <i class="absolute -left-px -top-px w-[8px] h-[3px] bg-black"></i><i class="absolute left-[55px] -top-px w-[8px] h-[3px] bg-black"></i><i class="absolute left-[114px] -top-px w-[8px] h-[3px] bg-black"></i><i class="absolute -right-px -top-px w-[8px] h-[3px] bg-black"></i>
  <span class="absolute left-[2px] top-[7px] text-[8px] leading-[8px] text-[#333]">CH1</span>
  <span class="absolute left-[52px] top-[7px] text-[8px] leading-[8px] text-[#333]">CH2</span>
  <span class="absolute left-[107px] top-[7px] text-[8px] leading-[8px] text-[#333]">CH3</span>
  <span class="absolute left-[154px] top-[7px] text-[8px] leading-[8px] text-[#333]">CH4</span>
  <span class="absolute left-[60px] top-[17px] whitespace-pre text-[11px] leading-[14px] text-[#333]">MIXER  2</span>
  <div class="absolute left-[4px] top-[33px]">
    <div class="flex h-[15px]"><div class="relative w-[134px] h-[16px] shrink-0 border border-black bg-[#fcfcfc]"><i class="absolute inset-y-0 left-[113px] w-[3px] bg-black"></i></div><span class="ml-[2px] leading-[15px]">CH1</span></div>
    <div class="flex h-[15px]"><div class="relative w-[134px] h-[16px] shrink-0 border border-black bg-[#fcfcfc]"><i class="absolute inset-y-0 left-[94px] w-[3px] bg-black"></i></div><span class="ml-[2px] leading-[15px]">CH2</span></div>
    <div class="flex h-[15px]"><div class="relative w-[134px] h-[16px] shrink-0 border border-black bg-[#fcfcfc]"><i class="absolute inset-y-0 left-[106px] w-[3px] bg-black"></i></div><span class="ml-[2px] leading-[15px]">CH3</span></div>
    <div class="flex h-[15px]"><div class="relative w-[134px] h-[16px] shrink-0 border border-black bg-[#fcfcfc]"><i class="absolute inset-y-0 left-[79px] w-[3px] bg-black"></i></div><span class="ml-[2px] leading-[15px]">CH4</span></div>
  </div>
</div>

<!-- bottom delay -->
<div class="absolute left-[477px] top-[753px] w-[201px] h-[80px] border border-black bg-white">
  <i class="absolute -left-px -top-px w-[8px] h-[3px] bg-black"></i><i class="absolute left-[47px] -top-px w-[8px] h-[3px] bg-black"></i><i class="absolute left-[95px] -top-px w-[8px] h-[3px] bg-black"></i><i class="absolute left-[143px] -top-px w-[8px] h-[3px] bg-black"></i><i class="absolute -right-px -top-px w-[8px] h-[3px] bg-black"></i>
  <span class="absolute left-[1px] top-[4px] text-[8px] leading-[8px] text-[#333]">IN</span>
  <span class="absolute left-[39px] top-[4px] text-[8px] leading-[8px] text-[#333]">RATE-L</span>
  <span class="absolute left-[87px] top-[4px] text-[8px] leading-[8px] text-[#333]">RATE-R</span>
  <span class="absolute left-[133px] top-[4px] text-[8px] leading-[8px] text-[#333]">FBACK</span>
  <span class="absolute left-[172px] top-[4px] text-[8px] leading-[8px] text-[#333]">LPASS</span>
</div>

<!-- loadbang -->
<div class="absolute left-[1105px] top-[719px] w-[61px] h-[18px] border border-black bg-white pl-[2px] text-[11.5px] leading-[15px]">loadbang<i class="absolute -left-px -bottom-px w-[8px] h-[2px] bg-black"></i></div>
<div class="absolute left-[1108px] top-[750px] w-[79px] h-[21px]"><svg class="absolute inset-0" width="79" height="21"><path d="M.5 20.500V.5H78.5L75 4V17L78.5 20.500" fill="#fff" stroke="#000"/></svg><i class="absolute left-0 top-0 w-[8px] h-[3px] bg-black"></i><span class="absolute left-[2px] top-[1px] whitespace-pre text-[11.5px] leading-[14px]">1 0, 0 1 1</span></div>

<!-- wires -->
<svg class="absolute inset-0 z-10 pointer-events-none" width="1370" height="764"><path fill="none" stroke="#000" stroke-width="2" d="M161.500 -2L283 148M126 100L124 148M124.500 222L136 380M124 221.500L-2 229.500M-2 309L192.500 291.500M193 366.500L227 380M135.500 619.500L48 677.500M375 637.500L105 677.500M773 653.500L162 677.500M1209 670.500L216 677.500M411.500 7.500L368.500 46M636.500 17.500L528 46M370.500 120.500L377 398M370.500 120.500L536.500 159M536.500 243.500L615 264.500M615 340L468 398M796.500 32.500L877.500 60.500M1046.500 5L1036 60.500M877.500 135.500L874 173M877.500 135.500L772 414.500M875 257.500L1001 285.500M1001 361L862 414.500M1186.500 53L1264 95M1264 169.500L1277.500 199.500M1264 169.500L1210 430.500M1278 284.500L1372 306.500M1300 431L1372 393M480 753L330 766"/><path fill="none" stroke="#000" stroke-width="1" d="M1109 736.500L1112 750"/></svg>

</div>
</body>
</html>
